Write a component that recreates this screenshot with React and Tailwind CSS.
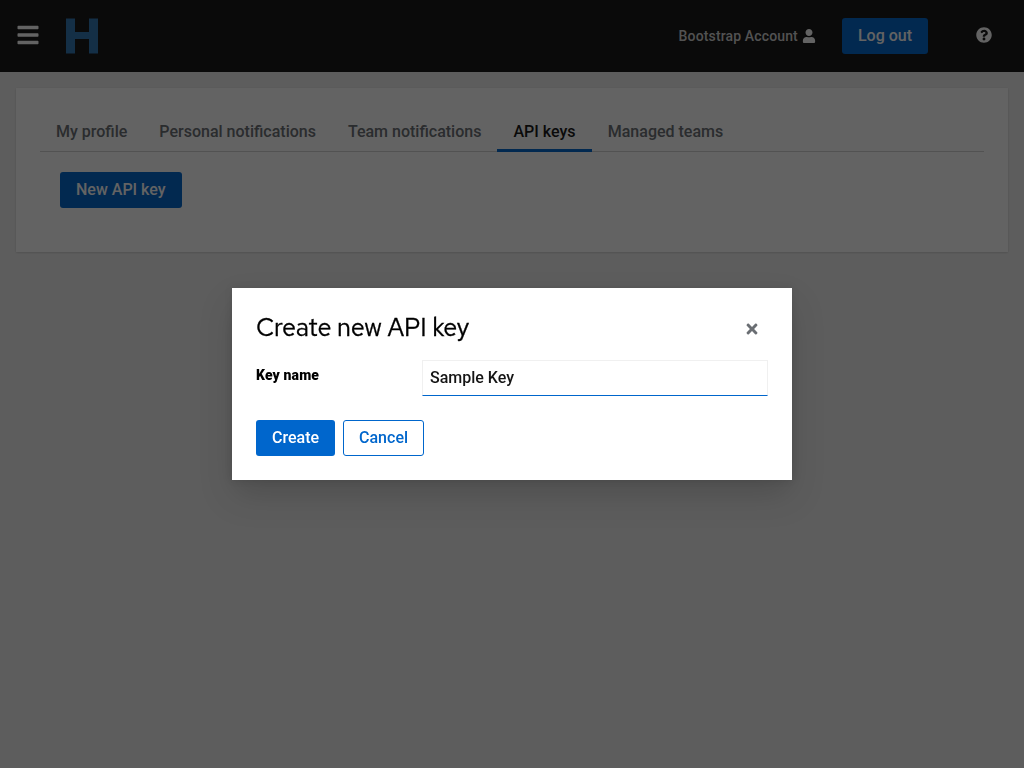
import React from "react";
import { FaBars, FaUser, FaQuestionCircle, FaTimes } from "react-icons/fa";

const tabs = ["My profile", "Personal notifications", "Team notifications", "API keys", "Managed teams"];

function Header() {
  return (
    <header className="flex h-[72px] items-center bg-[#151515] text-white">
      <FaBars className="ml-4 size-6 -translate-y-px" />
      <svg className="ml-[26px] h-9 w-8" viewBox="0 0 32 36" aria-label="H">
        <path fill="#3078b4" d="M0 .4h9v13.6h14V.4h9v35.2h-9V21H9v14.6H0z" />
      </svg>
      <div className="ml-auto flex items-center">
        <span className="text-sm leading-[21px] tracking-[0.14px] text-[#d2d2d2]">Bootstrap Account</span>
        <FaUser className="ml-1 size-3.5" />
        <button className="ml-[26px] h-9 rounded-[3px] bg-[#06c] px-4 leading-6">Log out</button>
        <FaQuestionCircle className="mr-8 ml-12 size-4 -translate-y-px" />
      </div>
    </header>
  );
}

function Tabs() {
  return (
    <nav className="flex h-10 shadow-[inset_0_-1px_0_#d2d2d2]">
      {tabs.map((t) => (
        <button
          key={t}
          className={
            t === "API keys"
              ? "border-b-[3px] border-[#06c] pt-[3px] pr-[16.3px] pl-4 leading-6 text-[#151515]"
              : "border-b-[3px] border-transparent px-4 pt-[3px] leading-6 text-[#6a6e73]"
          }
        >
          {t}
        </button>
      ))}
    </nav>
  );
}

function Modal() {
  return (
    <div className="fixed inset-0 flex items-center justify-center bg-[#030303]/62">
      <div className="h-48 w-[560px] bg-white p-6 shadow-[0_16px_32px_0_rgba(3,3,3,0.16),0_0_8px_0_rgba(3,3,3,0.1)]">
        <div className="flex h-8 items-center justify-between">
          <h1 className="pb-px font-['Red_Hat_Text','Red_Hat_Display','Inter',sans-serif] text-[25.2px] leading-[31px] font-normal tracking-[-0.17px] text-black [-webkit-text-stroke:0.3px_black]">
            Create new API key
          </h1>
          <button className="mr-2 translate-y-px text-[#6a6e73]" aria-label="Close">
            <FaTimes className="size-4" />
          </button>
        </div>
        <div className="mt-4 flex">
          <label className="w-[166px] pt-[5px] text-sm leading-[21px] font-black tracking-[0.13px] text-black">
            Key name
          </label>
          <input
            className="h-9 min-w-0 flex-1 border border-[#f0f0f0] border-b-[#06c] px-[7px] pb-px leading-6 text-[#151515] outline-none"
            defaultValue="Sample Key"
          />
        </div>
        <div className="mt-6 flex gap-2">
          <button className="h-9 rounded-[3px] bg-[#06c] px-4 leading-6 text-white">Create</button>
          <button className="h-9 rounded-[3px] border border-[#06c] px-[15px] leading-6 text-[#06c]">Cancel</button>
        </div>
      </div>
    </div>
  );
}

export default function App() {
  return (
    <div className="min-h-screen bg-[#f0f0f0] font-['Roboto',sans-serif] text-base font-medium">
      <Header />
      <main className="p-4">
        <section className="h-[164px] bg-white p-6 shadow-[0_1px_2px_0_rgba(3,3,3,0.12),0_0_2px_0_rgba(3,3,3,0.06)]">
          <Tabs />
          <button className="mt-5 ml-5 h-9 rounded-[3px] bg-[#06c] px-4 leading-6 text-white">New API key</button>
        </section>
      </main>
      <Modal />
    </div>
  );
}
